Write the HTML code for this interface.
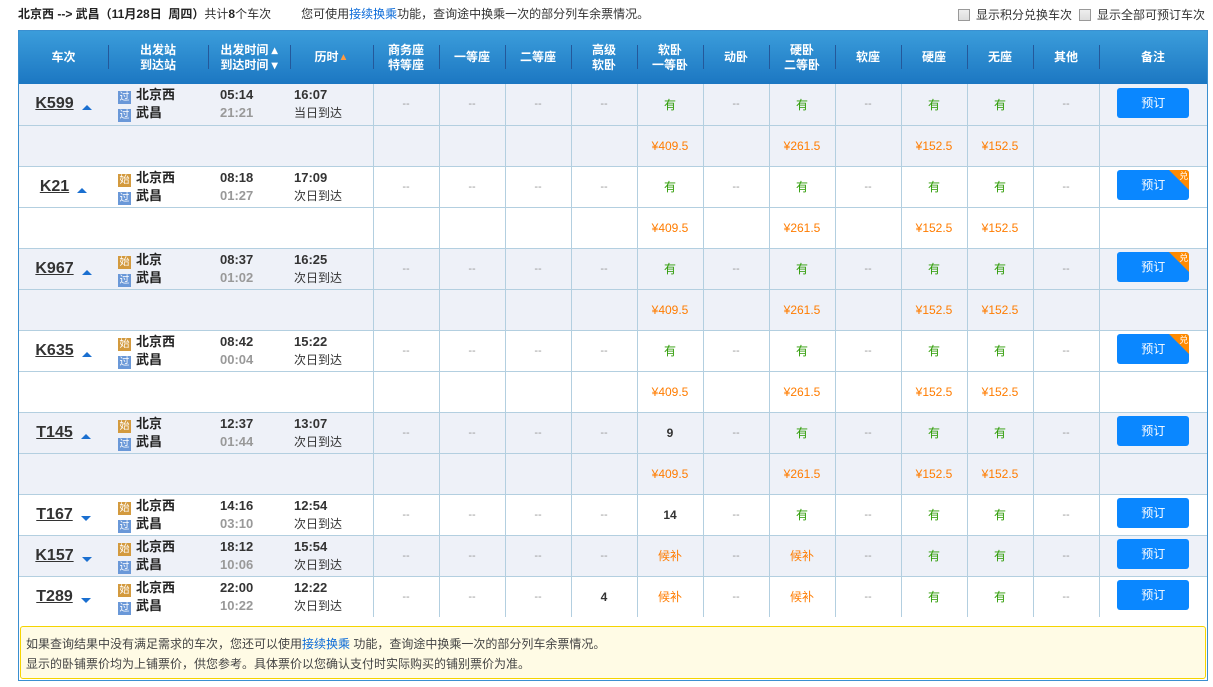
<!DOCTYPE html>
<html><head><meta charset="utf-8">
<style>
*{margin:0;padding:0;box-sizing:border-box}
body{width:1213px;height:687px;background:#fff;font-family:"Liberation Sans","Noto Sans CJK SC",sans-serif;font-size:12px;color:#333;position:relative;overflow:hidden}
.top{position:absolute;top:5px;left:18px;font-size:12px;color:#333;white-space:nowrap}
.top b{font-weight:bold;color:#222}
a{color:#0a6ad8;text-decoration:none}
.chk{position:absolute;top:6px;font-size:12px;white-space:nowrap}
.cb{display:inline-block;width:12px;height:12px;border:1px solid #999;background:linear-gradient(#eee,#ddd);vertical-align:-2px;margin-right:6px}
.frame{position:absolute;left:18px;top:30px;width:1190px;height:651px;border:1px solid #3a8fd0}
.hdr{position:absolute;left:19px;top:31px;width:1188px;height:53px;background:linear-gradient(#3b9ddb,#1c77c2);color:#fff;font-weight:bold;font-size:12px}
.hdr div{position:absolute;top:0;height:53px;display:flex;align-items:center;justify-content:center;text-align:center;line-height:15px}
.sep{position:absolute;top:14px;width:1px;height:24px;background:#24589a}
table{position:absolute;left:19px;top:84px;border-collapse:collapse;table-layout:fixed;width:1188px}
td{height:41px;border-bottom:1px solid #b3cfe0;text-align:center;vertical-align:middle;padding:0}
td.s{border-left:1px solid #b3cfe0}
tr.g td{background:#eef1f8}
.d{color:#999;font-size:11px}
.y{color:#2a9a00}
.p{color:#ff7c00;font-size:12px}
.hb{color:#ff7c00}
.n{font-weight:bold;color:#333}
.tn{font-weight:bold;font-size:16px;color:#333;text-decoration:underline;font-family:"Liberation Sans",sans-serif}
.ar{display:inline-block;width:0;height:0;border-left:5px solid transparent;border-right:5px solid transparent;margin-left:8px;vertical-align:-2px}
.up{border-bottom:5px solid #1a6fd0}
.dn{border-top:5px solid #1a6fd0}
.st{text-align:left;padding-left:10px;font-weight:bold;font-size:13px;line-height:18px;color:#222}
.ic{display:inline-block;width:13px;height:13px;font-size:10px;line-height:13px;color:#fff;text-align:center;vertical-align:-1px;margin-right:5px;font-weight:normal}
.ss{background:#d39a3e}.gg{background:#6a98d8}
.tm{text-align:left;padding-left:12px;font-weight:bold;font-size:13px;line-height:18px}
.tm .a{color:#999}
.ls{text-align:left;padding-left:4px;font-size:12px;line-height:18px}
.ls b{font-size:13px}
.btn{display:inline-block;width:72px;height:30px;line-height:30px;background:#0a87ff;color:#fff;border-radius:3px;font-size:12px;position:relative;overflow:hidden}
.btn.x:after{content:"";position:absolute;right:0;top:0;border-top:20px solid #ff8a00;border-left:20px solid transparent}
.btn.x i{position:absolute;right:1px;top:-9px;font-style:normal;font-size:9px;color:#fff;z-index:2}
.note{position:absolute;left:20px;top:626px;width:1186px;height:53px;background:#fffbe5;border:1px solid #f5d400;border-radius:3px;padding:7px 0 0 5px;font-size:12px;line-height:20px;color:#444}
</style></head><body>
<div class="top"><b>北京西 --&gt; 武昌（11月28日&nbsp; 周四）</b>共计<b>8</b>个车次 &nbsp; &nbsp; &nbsp; &nbsp; 您可使用<a>接续换乘</a>功能，查询途中换乘一次的部分列车余票情况。</div>
<div class="chk" style="left:958px"><span class="cb"></span>显示积分兑换车次</div>
<div class="chk" style="left:1079px"><span class="cb"></span>显示全部可预订车次</div>
<div class="frame"></div>
<div class="hdr">
<div style="left:0;width:89px">车次</div>
<div style="left:89px;width:100px">出发站<br>到达站</div>
<div style="left:189px;width:82px">出发时间 ▴<br>到达时间 ▾</div>
<div style="left:271px;width:83px">历时 <span style="color:#ff9a40;font-size:10px">▲</span></div>
<div style="left:354px;width:66px">商务座<br>特等座</div>
<div style="left:420px;width:66px">一等座</div>
<div style="left:486px;width:66px">二等座</div>
<div style="left:552px;width:66px">高级<br>软卧</div>
<div style="left:618px;width:66px">软卧<br>一等卧</div>
<div style="left:684px;width:66px">动卧</div>
<div style="left:750px;width:66px">硬卧<br>二等卧</div>
<div style="left:816px;width:66px">软座</div>
<div style="left:882px;width:66px">硬座</div>
<div style="left:948px;width:66px">无座</div>
<div style="left:1014px;width:66px">其他</div>
<div style="left:1080px;width:108px">备注</div>
<span class="sep" style="left:89px"></span><span class="sep" style="left:189px"></span><span class="sep" style="left:271px"></span><span class="sep" style="left:354px"></span><span class="sep" style="left:420px"></span><span class="sep" style="left:486px"></span><span class="sep" style="left:552px"></span><span class="sep" style="left:618px"></span><span class="sep" style="left:684px"></span><span class="sep" style="left:750px"></span><span class="sep" style="left:816px"></span><span class="sep" style="left:882px"></span><span class="sep" style="left:948px"></span><span class="sep" style="left:1014px"></span><span class="sep" style="left:1080px"></span>
</div>
<table>
<colgroup><col style="width:89px"><col style="width:100px"><col style="width:82px"><col style="width:83px"><col style="width:66px"><col style="width:66px"><col style="width:66px"><col style="width:66px"><col style="width:66px"><col style="width:66px"><col style="width:66px"><col style="width:66px"><col style="width:66px"><col style="width:66px"><col style="width:66px"><col style="width:108px"></colgroup>

<tr class="g"><td><span class="tn">K599</span><span class="ar up"></span></td><td class="st"><span class="ic gg">过</span>北京西<br><span class="ic gg">过</span>武昌</td><td class="tm">05:14<br><span class="a">21:21</span></td><td class="ls"><b>16:07</b><br>当日到达</td><td class="s d">--</td><td class="s d">--</td><td class="s d">--</td><td class="s d">--</td><td class="s y">有</td><td class="s d">--</td><td class="s y">有</td><td class="s d">--</td><td class="s y">有</td><td class="s y">有</td><td class="s d">--</td><td class="s"><span class="btn">预订</span></td></tr>
<tr class="g"><td></td><td></td><td></td><td></td><td class="s"></td><td class="s"></td><td class="s"></td><td class="s"></td><td class="s p">¥409.5</td><td class="s"></td><td class="s p">¥261.5</td><td class="s"></td><td class="s p">¥152.5</td><td class="s p">¥152.5</td><td class="s"></td><td class="s"></td></tr>

<tr><td><span class="tn">K21</span><span class="ar up"></span></td><td class="st"><span class="ic ss">始</span>北京西<br><span class="ic gg">过</span>武昌</td><td class="tm">08:18<br><span class="a">01:27</span></td><td class="ls"><b>17:09</b><br>次日到达</td><td class="s d">--</td><td class="s d">--</td><td class="s d">--</td><td class="s d">--</td><td class="s y">有</td><td class="s d">--</td><td class="s y">有</td><td class="s d">--</td><td class="s y">有</td><td class="s y">有</td><td class="s d">--</td><td class="s"><span class="btn x">预订<i>兑</i></span></td></tr>
<tr><td></td><td></td><td></td><td></td><td class="s"></td><td class="s"></td><td class="s"></td><td class="s"></td><td class="s p">¥409.5</td><td class="s"></td><td class="s p">¥261.5</td><td class="s"></td><td class="s p">¥152.5</td><td class="s p">¥152.5</td><td class="s"></td><td class="s"></td></tr>

<tr class="g"><td><span class="tn">K967</span><span class="ar up"></span></td><td class="st"><span class="ic ss">始</span>北京<br><span class="ic gg">过</span>武昌</td><td class="tm">08:37<br><span class="a">01:02</span></td><td class="ls"><b>16:25</b><br>次日到达</td><td class="s d">--</td><td class="s d">--</td><td class="s d">--</td><td class="s d">--</td><td class="s y">有</td><td class="s d">--</td><td class="s y">有</td><td class="s d">--</td><td class="s y">有</td><td class="s y">有</td><td class="s d">--</td><td class="s"><span class="btn x">预订<i>兑</i></span></td></tr>
<tr class="g"><td></td><td></td><td></td><td></td><td class="s"></td><td class="s"></td><td class="s"></td><td class="s"></td><td class="s p">¥409.5</td><td class="s"></td><td class="s p">¥261.5</td><td class="s"></td><td class="s p">¥152.5</td><td class="s p">¥152.5</td><td class="s"></td><td class="s"></td></tr>

<tr><td><span class="tn">K635</span><span class="ar up"></span></td><td class="st"><span class="ic ss">始</span>北京西<br><span class="ic gg">过</span>武昌</td><td class="tm">08:42<br><span class="a">00:04</span></td><td class="ls"><b>15:22</b><br>次日到达</td><td class="s d">--</td><td class="s d">--</td><td class="s d">--</td><td class="s d">--</td><td class="s y">有</td><td class="s d">--</td><td class="s y">有</td><td class="s d">--</td><td class="s y">有</td><td class="s y">有</td><td class="s d">--</td><td class="s"><span class="btn x">预订<i>兑</i></span></td></tr>
<tr><td></td><td></td><td></td><td></td><td class="s"></td><td class="s"></td><td class="s"></td><td class="s"></td><td class="s p">¥409.5</td><td class="s"></td><td class="s p">¥261.5</td><td class="s"></td><td class="s p">¥152.5</td><td class="s p">¥152.5</td><td class="s"></td><td class="s"></td></tr>

<tr class="g"><td><span class="tn">T145</span><span class="ar up"></span></td><td class="st"><span class="ic ss">始</span>北京<br><span class="ic gg">过</span>武昌</td><td class="tm">12:37<br><span class="a">01:44</span></td><td class="ls"><b>13:07</b><br>次日到达</td><td class="s d">--</td><td class="s d">--</td><td class="s d">--</td><td class="s d">--</td><td class="s n">9</td><td class="s d">--</td><td class="s y">有</td><td class="s d">--</td><td class="s y">有</td><td class="s y">有</td><td class="s d">--</td><td class="s"><span class="btn">预订</span></td></tr>
<tr class="g"><td></td><td></td><td></td><td></td><td class="s"></td><td class="s"></td><td class="s"></td><td class="s"></td><td class="s p">¥409.5</td><td class="s"></td><td class="s p">¥261.5</td><td class="s"></td><td class="s p">¥152.5</td><td class="s p">¥152.5</td><td class="s"></td><td class="s"></td></tr>

<tr><td><span class="tn">T167</span><span class="ar dn"></span></td><td class="st"><span class="ic ss">始</span>北京西<br><span class="ic gg">过</span>武昌</td><td class="tm">14:16<br><span class="a">03:10</span></td><td class="ls"><b>12:54</b><br>次日到达</td><td class="s d">--</td><td class="s d">--</td><td class="s d">--</td><td class="s d">--</td><td class="s n">14</td><td class="s d">--</td><td class="s y">有</td><td class="s d">--</td><td class="s y">有</td><td class="s y">有</td><td class="s d">--</td><td class="s"><span class="btn">预订</span></td></tr>

<tr class="g"><td><span class="tn">K157</span><span class="ar dn"></span></td><td class="st"><span class="ic ss">始</span>北京西<br><span class="ic gg">过</span>武昌</td><td class="tm">18:12<br><span class="a">10:06</span></td><td class="ls"><b>15:54</b><br>次日到达</td><td class="s d">--</td><td class="s d">--</td><td class="s d">--</td><td class="s d">--</td><td class="s hb">候补</td><td class="s d">--</td><td class="s hb">候补</td><td class="s d">--</td><td class="s y">有</td><td class="s y">有</td><td class="s d">--</td><td class="s"><span class="btn">预订</span></td></tr>

<tr><td style="border-bottom:0"><span class="tn">T289</span><span class="ar dn"></span></td><td class="st" style="border-bottom:0"><span class="ic ss">始</span>北京西<br><span class="ic gg">过</span>武昌</td><td class="tm" style="border-bottom:0">22:00<br><span class="a">10:22</span></td><td class="ls" style="border-bottom:0"><b>12:22</b><br>次日到达</td><td class="s d" style="border-bottom:0">--</td><td class="s d" style="border-bottom:0">--</td><td class="s d" style="border-bottom:0">--</td><td class="s n" style="border-bottom:0">4</td><td class="s hb" style="border-bottom:0">候补</td><td class="s d" style="border-bottom:0">--</td><td class="s hb" style="border-bottom:0">候补</td><td class="s d" style="border-bottom:0">--</td><td class="s y" style="border-bottom:0">有</td><td class="s y" style="border-bottom:0">有</td><td class="s d" style="border-bottom:0">--</td><td class="s" style="border-bottom:0"><span class="btn">预订</span></td></tr>
</table>
<div class="note">如果查询结果中没有满足需求的车次，您还可以使用<a>接续换乘</a> 功能，查询途中换乘一次的部分列车余票情况。<br>显示的卧铺票价均为上铺票价，供您参考。具体票价以您确认支付时实际购买的铺别票价为准。</div>
</body></html>
